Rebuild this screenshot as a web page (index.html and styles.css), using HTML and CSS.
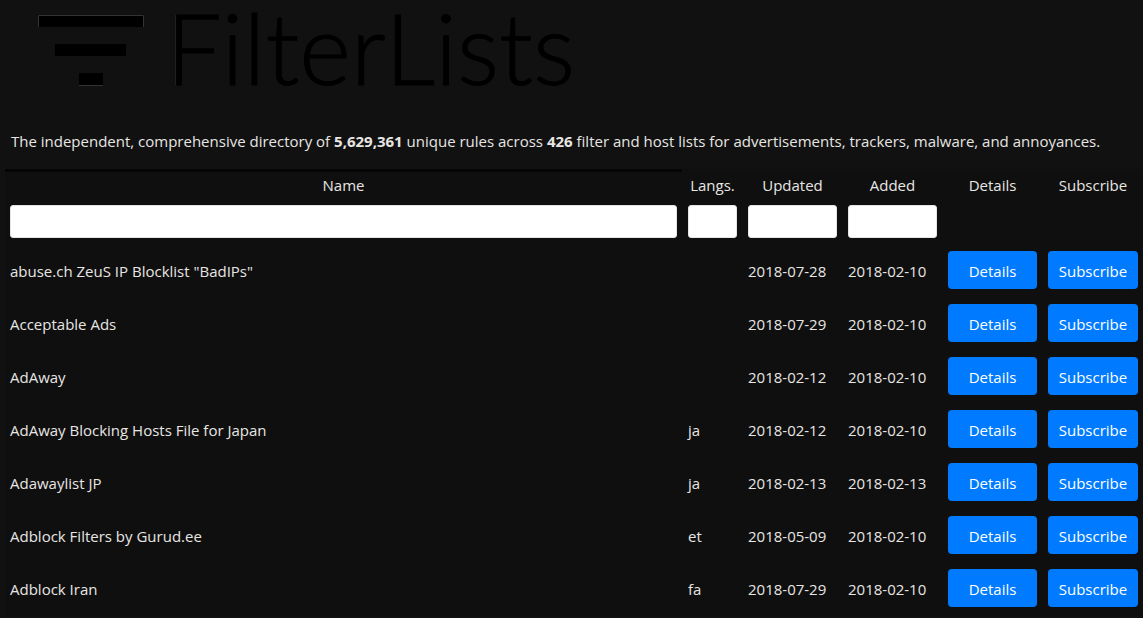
FILE: index.html
```html
<!DOCTYPE html>
<html lang="en">
<head>
<meta charset="utf-8">
<meta name="viewport" content="width=device-width, initial-scale=1">
<title>FilterLists</title>
<link rel="stylesheet" href="styles.css">
</head>
<body>
<header class="brand">
  <svg class="brand-mark" width="106" height="72" viewBox="0 0 106 72" aria-hidden="true">
    <rect x="0" y="0" width="106" height="12" fill="#000"/>
    <path d="M.5 12V.5H105.500V12" fill="none" stroke="#333"/>
    <rect x="17" y="29" width="71" height="12" fill="#000"/>
    <rect x="41" y="58" width="24" height="13" fill="#000"/>
    <path d="M41 70.500H65" stroke="#333"/>
  </svg>
  <h1 class="brand-name"><span class="brand-initial">F</span>ilterLists</h1>
</header>
<main>
  <p class="intro">The independent, comprehensive directory of <strong>5,629,361</strong> unique rules across <strong>426</strong> filter and host lists for advertisements, trackers, malware, and annoyances.</p>
  <table class="lists">
    <colgroup><col><col class="col-langs"><col class="col-std"><col class="col-std"><col class="col-std"><col class="col-last"></colgroup>
    <thead>
      <tr class="titles"><th class="sorted" scope="col">Name</th><th scope="col">Langs.</th><th scope="col">Updated</th><th scope="col">Added</th><th scope="col">Details</th><th scope="col">Subscribe</th></tr>
      <tr class="filters"><td><input type="text" aria-label="Name"></td><td><input type="text" aria-label="Langs."></td><td><input type="text" aria-label="Updated"></td><td><input type="text" aria-label="Added"></td><td></td><td></td></tr>
    </thead>
    <tbody>
      <tr><td>abuse.ch ZeuS IP Blocklist "BadIPs"</td><td></td><td>2018-07-28</td><td>2018-02-10</td><td class="action"><button type="button">Details</button></td><td class="action"><a class="button" href="#">Subscribe</a></td></tr>
      <tr><td>Acceptable Ads</td><td></td><td>2018-07-29</td><td>2018-02-10</td><td class="action"><button type="button">Details</button></td><td class="action"><a class="button" href="#">Subscribe</a></td></tr>
      <tr><td>AdAway</td><td></td><td>2018-02-12</td><td>2018-02-10</td><td class="action"><button type="button">Details</button></td><td class="action"><a class="button" href="#">Subscribe</a></td></tr>
      <tr><td>AdAway Blocking Hosts File for Japan</td><td>ja</td><td>2018-02-12</td><td>2018-02-10</td><td class="action"><button type="button">Details</button></td><td class="action"><a class="button" href="#">Subscribe</a></td></tr>
      <tr><td>Adawaylist JP</td><td>ja</td><td>2018-02-13</td><td>2018-02-13</td><td class="action"><button type="button">Details</button></td><td class="action"><a class="button" href="#">Subscribe</a></td></tr>
      <tr><td>Adblock Filters by Gurud.ee</td><td>et</td><td>2018-05-09</td><td>2018-02-10</td><td class="action"><button type="button">Details</button></td><td class="action"><a class="button" href="#">Subscribe</a></td></tr>
      <tr><td>Adblock Iran</td><td>fa</td><td>2018-07-29</td><td>2018-02-10</td><td class="action"><button type="button">Details</button></td><td class="action"><a class="button" href="#">Subscribe</a></td></tr>
    </tbody>
  </table>
</main>
</body>
</html>
```

FILE: styles.css
```css
* { box-sizing: border-box; }
body {
  margin: 0;
  background: #111;
  color: #e8e6e3;
  font: 15px/24px "Open Sans", "Noto Sans", sans-serif;
}
.brand {
  display: flex;
  align-items: flex-start;
  gap: 22px;
  padding: 0 38px 35px;
}
.brand-mark { flex: none; margin-top: 15px; }
.brand-name {
  margin: 0;
  color: #000;
  font: 300 99px/94px Lato, sans-serif;
  -webkit-text-stroke: 1px #000;
}
.brand-initial { text-shadow: -1px 0 #333; }
main { padding-left: 5px; }
.intro { margin: 0 0 16px; padding: 0 11px 0 6px; }
.lists {
  width: 100%;
  table-layout: fixed;
  border-collapse: separate;
  border-spacing: 0;
  background: #0f0f0f;
}
.col-langs { width: 60px; }
.col-std { width: 100px; }
.col-last { width: 101px; }
th, td { padding: 9px 5px 7px; text-align: left; vertical-align: middle; }
td + td, th + th { border-left: 1px solid #0f0f0f; }
tbody td { border-bottom: 1px solid #0e0e0e; }
.action { padding: 7px 5px; }
.titles th {
  height: 31px;
  padding: 0 5px 2px;
  border-top: 3px solid #0f0f0f;
  font-weight: 400;
  text-align: center;
}
.titles .sorted { border-top-color: #050505; }
.filters td { padding: 5px 5px 6px; }
input {
  display: block;
  width: 100%;
  height: 33px;
  padding: 0 8px;
  border: 1px solid #e5e5e5;
  border-radius: 3px;
  background: #fff;
  font: inherit;
}
button, .button {
  display: block;
  width: 100%;
  padding: 8px 0 6px;
  border: 0;
  border-radius: 4px;
  background: #007bff;
  color: #fff;
  font: inherit;
  text-align: center;
  text-decoration: none;
}
```
